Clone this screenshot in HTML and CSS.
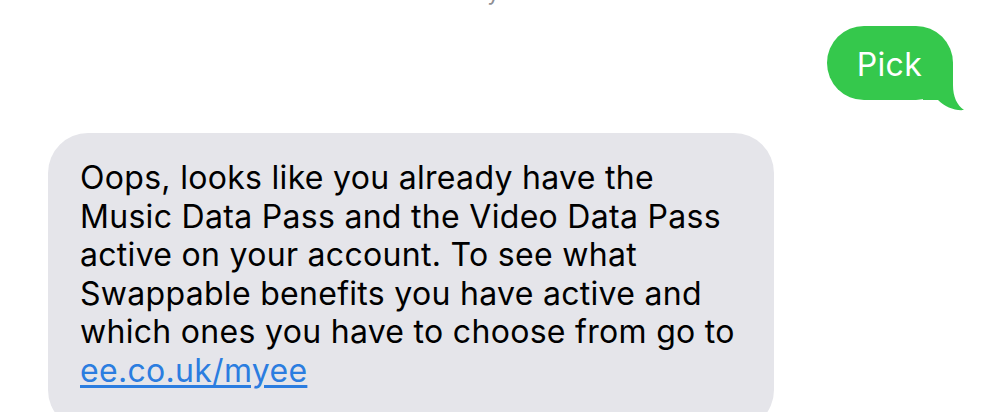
FILE: index.html
```html
<!DOCTYPE html>
<html lang="en">
  <head>
    <meta charset="UTF-8" />
    <meta name="viewport" content="width=device-width, initial-scale=1.0" />
    <title>Messages</title>
    <link rel="stylesheet" href="styles.css">
  </head>
  <body>
    <div class="thread">
      <!-- timestamp, mostly scrolled off the top -->
      <div class="stamp">Today 10:49</div>

      <div class="row sent">
        <div class="bubble green">
          Pick
          <svg class="tail" width="42" height="49" viewBox="0 0 42 49">
            <path d="M30 0 L30 22 C30 34 34 42 41 47 C32 48 22 44 15 37 L0 37 L0 20 Z" fill="#35c84c" />
          </svg>
        </div>
      </div>

      <div class="row received">
        <div class="bubble grey">
          Oops, looks like you already have the<br>
          Music Data Pass and the Video Data Pass<br>
          active on your account. To see what<br>
          Swappable benefits you have active and<br>
          which ones you have to choose from go to<br>
          <a href="#">ee.co.uk/myee</a>
        </div>
      </div>
    </div>
  </body>
</html>
```

FILE: styles.css
```css
body {
  margin: 0;
  background: #fff;
  font-family: Inter, "Liberation Sans", Arial, sans-serif;
  overflow: hidden;
}
.thread {
  height: 412px;
  overflow: hidden;
}
.stamp {
  margin-top: -21px;
  height: 26px;
  line-height: 26px;
  font-size: 22px;
  color: #8e8e93;
  text-align: center;
}
.row {
  display: flex;
}
.sent {
  justify-content: flex-end;
  padding-right: 46px;
  margin-top: 21px;
}
.received {
  padding-left: 48px;
  margin-top: 33px;
}
.bubble {
  position: relative;
  font-size: 32px;
  letter-spacing: 0.3px;
  line-height: 38.5px;
}
.green {
  background: #35c84c;
  color: #fff;
  height: 74px;
  line-height: 70px;
  padding: 4px 31px 0 30px;
  border-radius: 37px;
  box-sizing: border-box;
}
.tail {
  position: absolute;
  right: -12px;
  bottom: -12px;
}
.grey {
  background: #e5e5ea;
  color: #000;
  width: 726px;
  box-sizing: border-box;
  padding: 26px 20px 40px 32px;
  border-radius: 40px;
}
.grey a {
  color: #2b7de0;
  text-decoration: underline;
  text-underline-offset: 3px;
}
```
